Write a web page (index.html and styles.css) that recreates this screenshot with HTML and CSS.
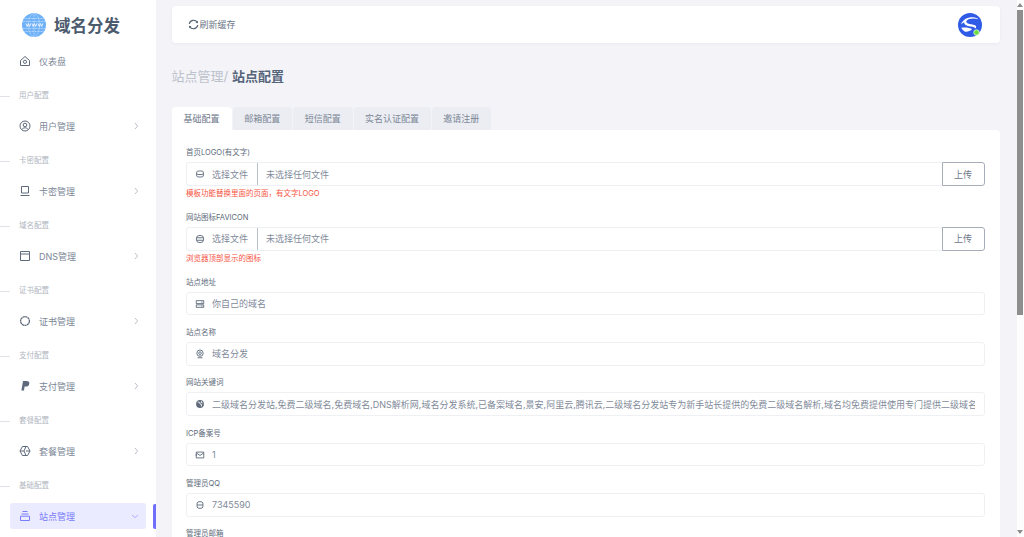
FILE: index.html
```html
<!DOCTYPE html>
<html lang="zh-CN">
<head>
<meta charset="utf-8">
<title>站点配置</title>
<link rel="stylesheet" href="styles.css">
</head>
<body>
<div class="app">
  <aside class="sidebar">
    <div class="brand">
      <svg class="brand-logo" viewBox="0 0 24 24" width="24" height="24">
        <circle cx="12" cy="12" r="12" fill="#6fb1f7"/>
        <g fill="none" stroke="#cfe4ff" stroke-width=".7" stroke-dasharray="1 .5">
          <ellipse cx="12" cy="12" rx="5.500" ry="11.500"/>
          <path d="M2.500 5.500h19M.8 8.500h22.400M.8 15.500h22.400M2.500 18.500h19M12 .5v23"/>
        </g>
        <path d="M4 10.500l1.200 3 1.200-3 1.200 3 1.200-3M10 10.500l1.200 3 1.200-3 1.200 3 1.200-3M16 10.500l1.200 3 1.200-3 1.200 3 1.200-3" fill="none" stroke="#fff" stroke-width=".8"/>
      </svg>
      <span class="brand-name">域名分发</span>
    </div>
    <nav class="menu">
      <a class="item">
        <svg class="item-icon" viewBox="0 0 12 12"><path d="M1.500 5.500L6 1.500l4.500 4v5h-9z"/><circle cx="6" cy="6.800" r="1.600"/></svg>
        <span class="item-text">仪表盘</span>
      </a>
      <div class="section">用户配置</div>
      <a class="item">
        <svg class="item-icon" viewBox="0 0 12 12"><circle cx="6" cy="6" r="5"/><circle cx="6" cy="5" r="1.800"/><path d="M2.800 9.600C3.600 8.300 4.700 7.800 6 7.800s2.400.5 3.200 1.800"/></svg>
        <span class="item-text">用户管理</span>
        <svg class="chev" viewBox="0 0 6 8"><path d="M2 1l2.600 3L2 7"/></svg>
      </a>
      <div class="section">卡密配置</div>
      <a class="item">
        <svg class="item-icon" viewBox="0 0 12 12"><path d="M2.500 1.500h7v6.500h-7zM1.500 10.500h9"/></svg>
        <span class="item-text">卡密管理</span>
        <svg class="chev" viewBox="0 0 6 8"><path d="M2 1l2.600 3L2 7"/></svg>
      </a>
      <div class="section">域名配置</div>
      <a class="item">
        <svg class="item-icon" viewBox="0 0 12 12"><path d="M1.500 1.500h9v9h-9zM1.500 4h9"/></svg>
        <span class="item-text">DNS管理</span>
        <svg class="chev" viewBox="0 0 6 8"><path d="M2 1l2.600 3L2 7"/></svg>
      </a>
      <div class="section">证书配置</div>
      <a class="item">
        <svg class="item-icon item-icon-bold" viewBox="0 0 12 12"><circle cx="6" cy="6" r="4.400" stroke-dasharray="2.200 .35"/></svg>
        <span class="item-text">证书管理</span>
        <svg class="chev" viewBox="0 0 6 8"><path d="M2 1l2.600 3L2 7"/></svg>
      </a>
      <div class="section">支付配置</div>
      <a class="item">
        <svg class="item-icon item-icon-fill" viewBox="0 0 12 12"><path d="M4 1h3.600c2 0 3 1 2.700 2.700-.3 1.900-1.600 2.900-3.500 2.900H5.600L5 10.500H2.400z"/></svg>
        <span class="item-text">支付管理</span>
        <svg class="chev" viewBox="0 0 6 8"><path d="M2 1l2.600 3L2 7"/></svg>
      </a>
      <div class="section">套餐配置</div>
      <a class="item">
        <svg class="item-icon" viewBox="0 0 12 12"><path d="M3.400 1.500h5.200L11 6l-2.400 4.500H3.400L1 6zM1 6h4l2-4.500M5 6l2 4.500M7 6H11"/></svg>
        <span class="item-text">套餐管理</span>
        <svg class="chev" viewBox="0 0 6 8"><path d="M2 1l2.600 3L2 7"/></svg>
      </a>
      <div class="section">基础配置</div>
      <div class="active-row">
        <a class="item item-active">
          <svg class="item-icon" viewBox="0 0 12 12"><path d="M3.500 1.500h5M2.500 4h7M1.500 6.200h9v4.300h-9z"/></svg>
          <span class="item-text">站点管理</span>
          <svg class="chev chev-down" viewBox="0 0 8 6"><path d="M1 2l3 2.600L7 2"/></svg>
        </a>
        <span class="active-bar"></span>
      </div>
    </nav>
  </aside>

  <main class="main">
    <header class="topbar">
      <a class="refresh">
        <svg class="refresh-icon" viewBox="0 0 12 12"><path d="M1.400 5.200A4.700 4.700 0 0 1 10 3.600M10.600 6.800A4.700 4.700 0 0 1 2 8.400"/><path class="refresh-head" d="M8.300 4.200l2.400.4.300-2.700zM3.700 7.800l-2.400-.4-.3 2.700z"/></svg>
        <span>刷新缓存</span>
      </a>
      <span class="avatar">
        <svg viewBox="0 0 24 24" width="24" height="24">
          <circle cx="12" cy="12" r="12" fill="#2f5be7"/>
          <path d="M3 11.500C4.500 6.500 9.500 4 15 4.200c2.500.1 4.500 1 5.500 2.100-3-.9-6.500-1.100-9.300-.2-3 1-3.700 3-1.700 4.200 2 1.200 5.500 1 7.500 2 1.500.8 1.600 2.300.3 3.300-.2-1.300-2-1.900-4.800-2.200C8.800 13 6 11.700 6.200 9.200 5 9.800 3.800 10.600 3 11.500z" fill="#fff"/>
          <path d="M3.200 14.800c4-.8 8-.2 11 1.200-2 2-4.500 3-7 2.700-1.700-.9-3.100-2.200-4-3.900z" fill="#fff"/>
          <circle cx="18.500" cy="19.500" r="2.800" fill="#6fdc45" stroke="#fff" stroke-width=".6"/>
        </svg>
      </span>
    </header>

    <h1 class="crumb"><span class="crumb-parent">站点管理/</span> <b class="crumb-current">站点配置</b></h1>

    <div class="tabs">
      <a class="tab tab-active">基础配置</a>
      <a class="tab">邮箱配置</a>
      <a class="tab">短信配置</a>
      <a class="tab tab-wide">实名认证配置</a>
      <a class="tab">邀请注册</a>
    </div>

    <section class="panel">
      <div class="group group-help">
        <label class="label">首页LOGO(有文字)</label>
        <div class="file-row">
          <div class="file-box">
            <span class="file-pick">
              <svg class="field-icon" viewBox="0 0 12 12"><path d="M2 3.500C2 2 10 2 10 3.500v5c0 1.500-8 1.500-8 0zM2 6c1 1 7 1 8 0"/></svg>
              <span>选择文件</span>
            </span>
            <span class="file-name">未选择任何文件</span>
          </div>
          <button class="upload" type="button">上传</button>
        </div>
        <p class="help">模板功能替换里面的页面，有文字LOGO</p>
      </div>
      <div class="group group-help">
        <label class="label">网站图标FAVICON</label>
        <div class="file-row">
          <div class="file-box">
            <span class="file-pick">
              <svg class="field-icon" viewBox="0 0 12 12"><circle cx="6" cy="6" r="4.500"/><path d="M2 4.500h8M2 7.500h8"/></svg>
              <span>选择文件</span>
            </span>
            <span class="file-name">未选择任何文件</span>
          </div>
          <button class="upload" type="button">上传</button>
        </div>
        <p class="help">浏览器顶部显示的图标</p>
      </div>
      <div class="group">
        <label class="label">站点地址</label>
        <div class="field">
          <svg class="field-icon" viewBox="0 0 12 12"><path d="M1.500 2h9v3.500h-9zM1.500 7h9v3h-9zM7.500 3.700h1.500M7.500 8.500h1.500"/></svg>
          <span class="field-text">你自己的域名</span>
        </div>
      </div>
      <div class="group">
        <label class="label">站点名称</label>
        <div class="field">
          <svg class="field-icon" viewBox="0 0 12 12"><circle cx="6" cy="5" r="3.800"/><circle cx="6" cy="5" r="1.600"/><path d="M3 10.500h6"/></svg>
          <span class="field-text">域名分发</span>
        </div>
      </div>
      <div class="group">
        <label class="label">网站关键词</label>
        <div class="field">
          <svg class="field-icon field-icon-fill" viewBox="0 0 12 12"><circle cx="6" cy="6" r="4.700"/><path class="globe-cut" d="M3 3.500l2.500.5.500 2 2 .5-.5 2.500M8 2.500l-.8 1.500 2 .7"/></svg>
          <span class="field-text">二级域名分发站,免费二级域名,免费域名,DNS解析网,域名分发系统,已备案域名,景安,阿里云,腾讯云,二级域名分发站专为新手站长提供的免费二级域名解析,域名均免费提供使用专门提供二级域名解析</span>
        </div>
      </div>
      <div class="group">
        <label class="label">ICP备案号</label>
        <div class="field">
          <svg class="field-icon" viewBox="0 0 12 12"><path d="M1.500 2.500h9v7h-9zM1.500 3.500L6 6.500l4.500-3M.5 6h2"/></svg>
          <span class="field-text">1</span>
        </div>
      </div>
      <div class="group">
        <label class="label">管理员QQ</label>
        <div class="field">
          <svg class="field-icon" viewBox="0 0 12 12"><path d="M2.500 3.500C2.500 1.500 9.500 1.500 9.500 3.500v5c0 2-7 2-7 0zM2.500 6h7"/></svg>
          <span class="field-text">7345590</span>
        </div>
      </div>
      <div class="group">
        <label class="label">管理员邮箱</label>
      </div>
    </section>
  </main>

  <div class="scrollbar">
    <span class="scroll-up"></span>
    <span class="scroll-thumb"></span>
    <span class="scroll-down"></span>
  </div>
</div>
</body>
</html>
```
FILE: styles.css
```css
* { box-sizing: border-box; }
html, body { margin: 0; height: 100%; overflow: hidden; }
body {
  font-family: Inter, "Noto Sans CJK SC", "Noto Sans", sans-serif;
  background: #f3f3f8;
  color: #7c8797;
}
a { display: flex; }
.app { display: flex; height: 537px; overflow: hidden; }

/* sidebar */
.sidebar { width: 156px; flex: none; background: #fff; }
.brand { display: flex; align-items: center; height: 50px; padding-left: 22px; gap: 8px; }
.brand-logo { flex: none; }
.brand-name { font-size: 16.500px; font-weight: 700; color: #4d5b6e; }
.menu { display: flex; flex-direction: column; }
.item {
  display: flex; align-items: center;
  height: 26px; margin: -2px 10px 0 10px; padding: 0 7px 0 9px;
  font-size: 9px; color: #7c8797; border-radius: 3px;
}
.item-icon { width: 12px; height: 12px; flex: none; fill: none; stroke: #5f6b7c; stroke-width: 1; margin-right: 8px; }
.item-icon-bold { stroke-width: 1.300; }
.item-icon-fill { fill: #5f6b7c; stroke: none; }
.item-text { flex: 1; }
.chev { width: 6px; height: 8px; fill: none; stroke: #a9b1bc; stroke-width: .8; flex: none; }
.chev-down { width: 8px; height: 6px; stroke: #a99bff; }
.section {
  position: relative;
  height: 10px; line-height: 10px; margin: 17px 0 14px; padding-left: 19px;
  font-size: 7.500px; color: #b0b6c0;
}
.section::before {
  content: ""; position: absolute; left: 0; top: 5px; width: 10px; height: 1px; background: #dfe2e7;
}
.active-row { display: flex; align-items: center; margin-top: -2px; }
.item-active { flex: 1; margin: 0 7.300px 0 10px; background: #ebebff; color: #7a7cfb; }
.item-active .item-icon { stroke: #7a7cfb; }
.active-bar { width: 2.700px; height: 25px; background: #6f6ffb; border-radius: 2px 0 0 2px; }

/* main */
.main { flex: 1; min-width: 0; padding: 6.300px 17px 0 15.600px; overflow: hidden; }
.topbar {
  display: flex; align-items: center; justify-content: space-between;
  height: 37px; padding: 0 18px 0 16px;
  background: #fff; border-radius: 4px; box-shadow: 0 1px 3px rgba(80, 90, 120, .06);
}
.refresh { display: flex; align-items: center; gap: 1px; font-size: 9px; color: #6b7687; }
.refresh-icon { width: 11px; height: 11px; fill: none; stroke: #55616f; stroke-width: 1.300; }
.refresh-head { fill: #55616f; stroke: none; }
.avatar { display: flex; }
.crumb { margin: 23px 0 0; height: 20px; line-height: 20px; font-size: 13px; font-weight: 400; }
.crumb-parent { color: #bcc2cb; }
.crumb-current { color: #56647a; font-weight: 700; }
.tabs { display: flex; gap: 1px; margin-top: 21px; }
.tab {
  width: 59.500px; height: 23px; justify-content: center; align-items: center;
  font-size: 9px; color: #7c8797; background: #ebedf2; border-radius: 4px 4px 0 0;
}
.tab-wide { width: 77px; }
.tab-active { background: #fff; color: #6b7687; width: 60px; }
.panel { background: #fff; padding: 18px 15.400px 0 14.400px; height: 420px; border-radius: 0 4px 0 0; }

.group { margin-bottom: 12.800px; }
.group-help { margin-bottom: 12.300px; }
.label { display: block; height: 10px; line-height: 10px; margin-bottom: 4px; font-size: 7.500px; color: #606b7a; }
.field, .file-box {
  display: flex; align-items: center; height: 23.500px;
  border: 1px solid #eef0f3; border-radius: 3px; background: #fff;
  font-size: 9px; color: #7f8a9a;
}
.field { padding: 0 9px 0 8px; }
.field-icon { width: 10px; height: 10px; flex: none; fill: none; stroke: #5f6b7c; stroke-width: 1.100; margin-right: 7px; }
.field-icon-fill { fill: #5f6b7c; stroke: none; }
.globe-cut { fill: none; stroke: #fff; stroke-width: 1; }
.field-text { flex: 1; min-width: 0; white-space: nowrap; overflow: hidden; }
.file-row { display: flex; }
.file-box { flex: 1; border-right: 0; border-radius: 3px 0 0 3px; }
.file-pick {
  display: flex; align-items: center; align-self: stretch; padding: 0 9px 0 8px;
  border-right: 1px solid #b9c0c9;
}
.file-name { padding-left: 8px; }
.upload {
  width: 43px; height: 23.500px; padding: 0; background: #fff; font: inherit; font-size: 9px; color: #6b7687;
  border: 1px solid #a6adb8; border-radius: 0 3px 3px 0;
}
.help { margin: 0; height: 15px; line-height: 15px; font-size: 7.500px; color: #f5543f; }

/* scrollbar */
.scrollbar {
  width: 7px; flex: none; background: #fdfdfe; position: relative;
}
.scroll-up, .scroll-down { position: absolute; left: 0; width: 0; height: 0; border-left: 3.500px solid transparent; border-right: 3.500px solid transparent; }
.scroll-up { top: 3px; border-bottom: 4px solid #8b8b8b; }
.scroll-down { bottom: 3px; border-top: 4px solid #8b8b8b; }
.scroll-thumb { position: absolute; left: 0; top: 10px; width: 6px; height: 305px; background: #8e8e8e; }
```
